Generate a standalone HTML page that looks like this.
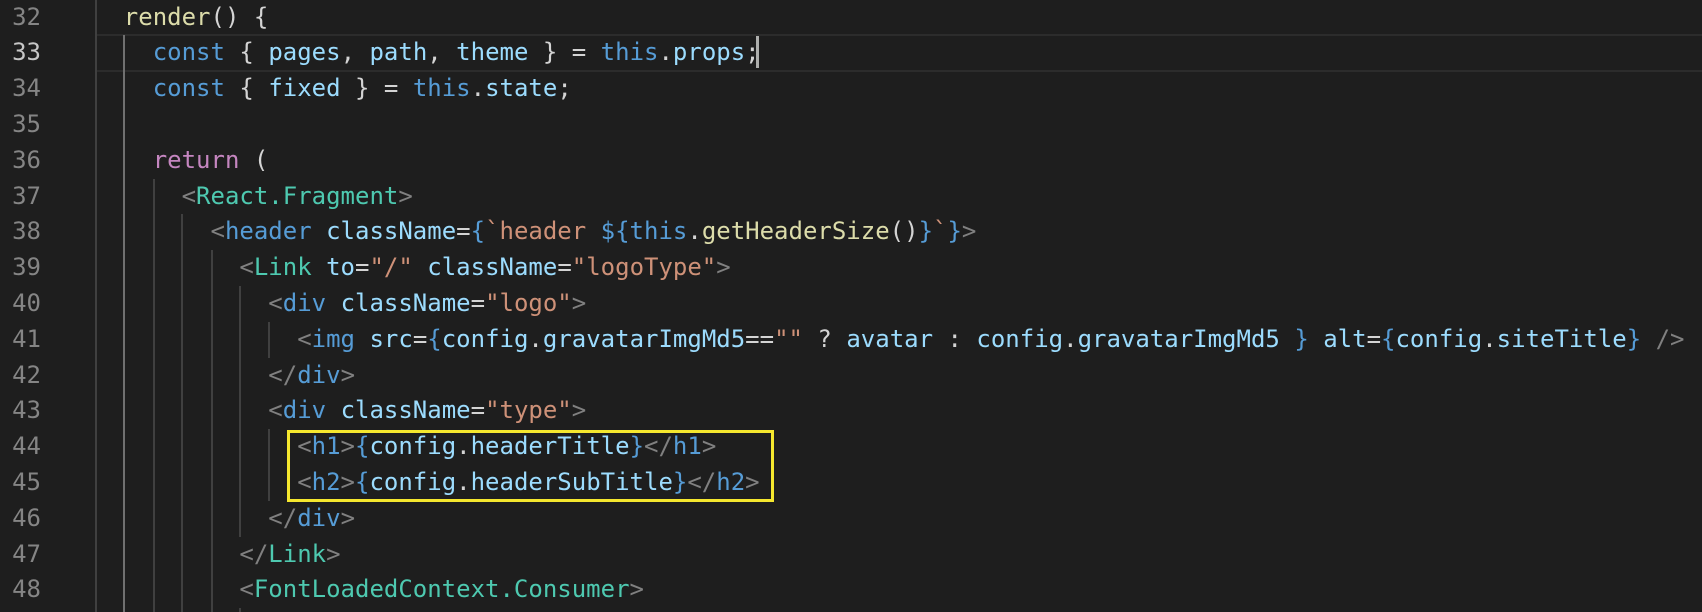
<!DOCTYPE html>
<html><head><meta charset="utf-8">
<style>
html,body{margin:0;padding:0;background:#1e1e1e;width:1702px;height:612px;overflow:hidden;}
.ed{position:relative;width:1702px;height:612px;background:#1e1e1e;font-family:"DejaVu Sans Mono","Liberation Mono",monospace;font-size:24px;}
.ln{position:absolute;left:0;width:41px;text-align:right;color:#858585;line-height:35.8px;height:35.8px;white-space:pre;}
.cl{position:absolute;left:66px;line-height:35.8px;height:35.8px;white-space:pre;color:#d4d4d4;}
.g{position:absolute;width:2px;background:#404040;}
.k{color:#569cd6}.v{color:#9cdcfe}.f{color:#dcdcaa}.r{color:#c586c0}.t{color:#4ec9b0}.p{color:#808080}.s{color:#ce9178}.d{color:#d4d4d4}
</style></head><body><div class="ed">
<!-- current line highlight -->
<div style="position:absolute;left:95px;right:0;top:34px;height:34px;border-top:2px solid #2c2c2c;border-bottom:2px solid #2c2c2c;"></div>
<!-- indent guides -->
<div class="g" style="left:95px;top:0;height:612px"></div>
<div class="g" style="left:123px;top:35px;height:577px;background:#707070"></div>
<div class="g" style="left:153px;top:179px;height:433px"></div>
<div class="g" style="left:181px;top:214px;height:398px"></div>
<div class="g" style="left:211px;top:250px;height:362px"></div>
<div class="g" style="left:239px;top:286px;height:251px"></div>
<div class="g" style="left:268px;top:322px;height:36px"></div>
<div class="g" style="left:268px;top:429px;height:72px"></div>
<div class="g" style="left:239px;top:608px;height:4px"></div>
<!-- cursor -->
<div style="position:absolute;left:756px;top:36px;width:3px;height:32px;background:#aeafad"></div>
<!-- yellow box -->
<div style="position:absolute;left:287px;top:430px;width:481px;height:66px;border:3px solid #f5e72e;"></div>

<div class="ln" style="top:-0.5px">32</div>
<div class="ln" style="top:35.3px;color:#c6c6c6">33</div>
<div class="ln" style="top:71.1px">34</div>
<div class="ln" style="top:106.9px">35</div>
<div class="ln" style="top:142.7px">36</div>
<div class="ln" style="top:178.5px">37</div>
<div class="ln" style="top:214.3px">38</div>
<div class="ln" style="top:250.1px">39</div>
<div class="ln" style="top:285.9px">40</div>
<div class="ln" style="top:321.7px">41</div>
<div class="ln" style="top:357.5px">42</div>
<div class="ln" style="top:393.3px">43</div>
<div class="ln" style="top:429.1px">44</div>
<div class="ln" style="top:464.9px">45</div>
<div class="ln" style="top:500.7px">46</div>
<div class="ln" style="top:536.5px">47</div>
<div class="ln" style="top:572.3px">48</div>

<div class="cl" style="top:-0.5px">    <span class="f">render</span>() {</div>
<div class="cl" style="top:35.3px">      <span class="k">const</span> { <span class="v">pages</span>, <span class="v">path</span>, <span class="v">theme</span> } = <span class="k">this</span>.<span class="v">props</span>;</div>
<div class="cl" style="top:71.1px">      <span class="k">const</span> { <span class="v">fixed</span> } = <span class="k">this</span>.<span class="v">state</span>;</div>
<div class="cl" style="top:142.7px">      <span class="r">return</span> (</div>
<div class="cl" style="top:178.5px">        <span class="p">&lt;</span><span class="t">React.Fragment</span><span class="p">&gt;</span></div>
<div class="cl" style="top:214.3px">          <span class="p">&lt;</span><span class="k">header</span> <span class="v">className</span>=<span class="k">{</span><span class="s">`header </span><span class="k">${this</span>.<span class="f">getHeaderSize</span>()<span class="k">}</span><span class="s">`</span><span class="k">}</span><span class="p">&gt;</span></div>
<div class="cl" style="top:250.1px">            <span class="p">&lt;</span><span class="t">Link</span> <span class="v">to</span>=<span class="s">"/"</span> <span class="v">className</span>=<span class="s">"logoType"</span><span class="p">&gt;</span></div>
<div class="cl" style="top:285.9px">              <span class="p">&lt;</span><span class="k">div</span> <span class="v">className</span>=<span class="s">"logo"</span><span class="p">&gt;</span></div>
<div class="cl" style="top:321.7px">                <span class="p">&lt;</span><span class="k">img</span> <span class="v">src</span>=<span class="k">{</span><span class="v">config</span>.<span class="v">gravatarImgMd5</span>==<span class="s">""</span> ? <span class="v">avatar</span> : <span class="v">config</span>.<span class="v">gravatarImgMd5</span> <span class="k">}</span> <span class="v">alt</span>=<span class="k">{</span><span class="v">config</span>.<span class="v">siteTitle</span><span class="k">}</span> <span class="p">/&gt;</span></div>
<div class="cl" style="top:357.5px">              <span class="p">&lt;/</span><span class="k">div</span><span class="p">&gt;</span></div>
<div class="cl" style="top:393.3px">              <span class="p">&lt;</span><span class="k">div</span> <span class="v">className</span>=<span class="s">"type"</span><span class="p">&gt;</span></div>
<div class="cl" style="top:429.1px">                <span class="p">&lt;</span><span class="k">h1</span><span class="p">&gt;</span><span class="k">{</span><span class="v">config</span>.<span class="v">headerTitle</span><span class="k">}</span><span class="p">&lt;/</span><span class="k">h1</span><span class="p">&gt;</span></div>
<div class="cl" style="top:464.9px">                <span class="p">&lt;</span><span class="k">h2</span><span class="p">&gt;</span><span class="k">{</span><span class="v">config</span>.<span class="v">headerSubTitle</span><span class="k">}</span><span class="p">&lt;/</span><span class="k">h2</span><span class="p">&gt;</span></div>
<div class="cl" style="top:500.7px">              <span class="p">&lt;/</span><span class="k">div</span><span class="p">&gt;</span></div>
<div class="cl" style="top:536.5px">            <span class="p">&lt;/</span><span class="t">Link</span><span class="p">&gt;</span></div>
<div class="cl" style="top:572.3px">            <span class="p">&lt;</span><span class="t">FontLoadedContext.Consumer</span><span class="p">&gt;</span></div>
</div></body></html>
